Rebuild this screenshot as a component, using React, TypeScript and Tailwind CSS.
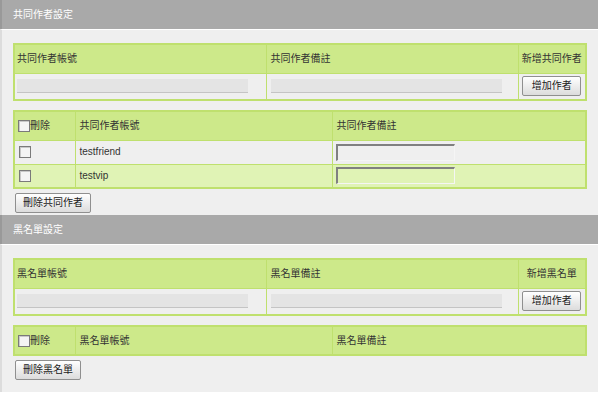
const font = { fontFamily: '"Liberation Sans", "Noto Sans CJK TC", sans-serif' };

const Btn = ({ label, w }: { label: string; w: string }) => (
  <button
    className={`h-[20px] ${w} rounded-[2px] border border-[#8f8f8f] bg-gradient-to-b from-white to-[#dcdcdc] text-[10px] text-[#222] leading-none`}
  >
    {label}
  </button>
);

const TextBox = ({ alt }: { alt?: boolean }) => (
  <div
    className={`h-[17px] w-[119px] border-t-2 border-l-2 border-b border-r border-t-[#808080] border-l-[#808080] border-b-[#f5f5f5] border-r-[#f5f5f5] ${
      alt ? "bg-[#e0f3b5]" : "bg-[#efefef]"
    }`}
  />
);

const Check = () => (
  <span className="inline-block h-[12px] w-[12px] border border-[#7a7a7a] bg-[#f4f4f4] shadow-[inset_1px_1px_0_#c8c8c8]" />
);

const Bar = () => (
  <div className="h-[14px] w-[231px] border-b border-[#c4c4c4] bg-[#e4e4e4]" />
);

const Header = ({ title }: { title: string }) => (
  <div className="flex h-[29px] items-center border-l-2 border-[#999] bg-[#a9a9a9] pl-[11px] text-[10px] text-white">
    {title}
  </div>
);

function AddTable({ c1, c2, c3 }: { c1: string; c2: string; c3: string }) {
  return (
    <table className="w-[574px] border-collapse border-2 border-[#bfe06e] text-[10px] text-[#333]">
      <tbody>
        <tr className="h-[29px] bg-[#cde98a]">
          <td className="w-[252px] border border-[#bfe06e] pl-[2px]">{c1}</td>
          <td className="w-[252px] border border-[#bfe06e] pl-[4px]">{c2}</td>
          <td className="border border-[#bfe06e] text-center">{c3}</td>
        </tr>
        <tr className="h-[27px] bg-[#efefef]">
          <td className="border border-[#bfe06e] pl-[2px]">
            <Bar />
          </td>
          <td className="border border-[#bfe06e] pl-[4px]">
            <Bar />
          </td>
          <td className="border border-[#bfe06e] text-center">
            <Btn label="增加作者" w="w-[59px]" />
          </td>
        </tr>
      </tbody>
    </table>
  );
}

function ListTable({
  c2,
  c3,
  rows,
}: {
  c2: string;
  c3: string;
  rows: string[];
}) {
  return (
    <table className="w-[574px] border-collapse border-2 border-[#bfe06e] text-[10px] text-[#333]">
      <tbody>
        <tr className="h-[29px] bg-[#cde98a]">
          <td className="w-[61px] border border-[#bfe06e] pl-[3px]">
            <span className="flex items-center">
              <Check />
              <span>刪除</span>
            </span>
          </td>
          <td className="w-[257px] border border-[#bfe06e] pl-[4px]">{c2}</td>
          <td className="border border-[#bfe06e] pl-[4px]">{c3}</td>
        </tr>
        {rows.map((r, i) => (
          <tr
            key={r}
            className={`h-[24px] ${i % 2 ? "bg-[#e0f3b5]" : "bg-[#efefef]"}`}
          >
            <td className="border border-[#bfe06e] py-0 pl-[4px]">
              <span className="flex items-center">
                <Check />
              </span>
            </td>
            <td className="border border-[#bfe06e] py-0 pl-[4px] leading-none">{r}</td>
            <td className="border border-[#bfe06e] py-0 pl-[3px]">
              <TextBox alt={i % 2 === 1} />
            </td>
          </tr>
        ))}
      </tbody>
    </table>
  );
}

export default function App() {
  return (
    <div className="h-[394px] w-[600px] bg-white" style={font}>
      <div className="w-[598px]">
        <Header title="共同作者設定" />
        <div className="border-l-2 border-t border-[#dcdcdc] border-t-white bg-[#efefef] pb-[2px] pl-[11px] pt-[13px]">
          <AddTable c1="共同作者帳號" c2="共同作者備註" c3="新增共同作者" />
          <div className="mt-[9px]">
            <ListTable
              c2="共同作者帳號"
              c3="共同作者備註"
              rows={["testfriend", "testvip"]}
            />
          </div>
          <div className="mt-[4px] flex pl-[2px]">
            <Btn label="刪除共同作者" w="w-[76px]" />
          </div>
        </div>
        <Header title="黑名單設定" />
        <div className="border-l-2 border-t border-[#dcdcdc] border-t-white bg-[#efefef] pb-[12px] pl-[11px] pt-[13px]">
          <AddTable c1="黑名單帳號" c2="黑名單備註" c3="新增黑名單" />
          <div className="mt-[9px]">
            <ListTable c2="黑名單帳號" c3="黑名單備註" rows={[]} />
          </div>
          <div className="mt-[4px] flex pl-[2px]">
            <Btn label="刪除黑名單" w="w-[66px]" />
          </div>
        </div>
      </div>
    </div>
  );
}
